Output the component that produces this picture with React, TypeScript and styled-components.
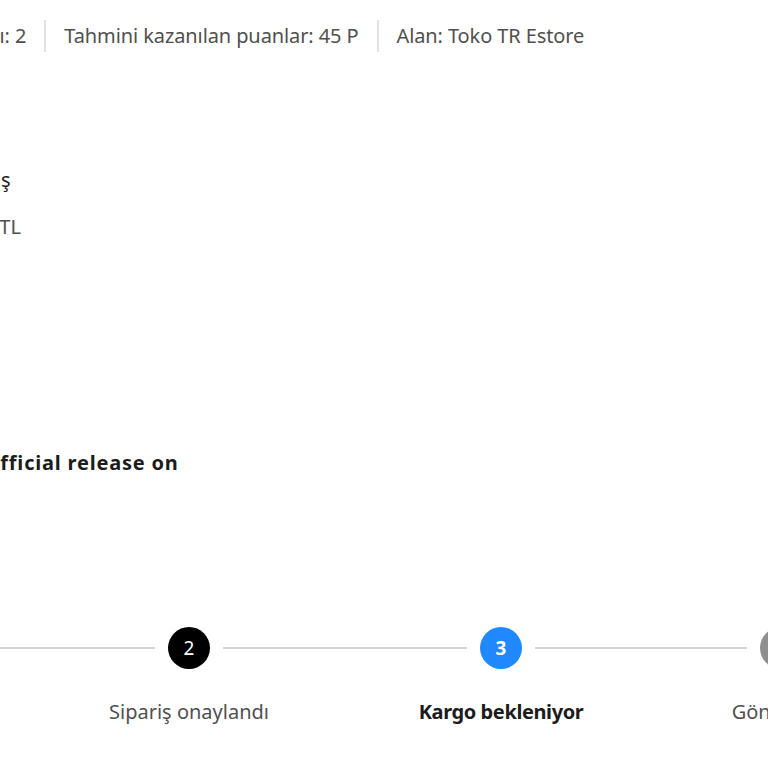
import { Fragment } from 'react'
import styled, { createGlobalStyle } from 'styled-components'

const GlobalStyle = createGlobalStyle`
  html,
  body {
    margin: 0;
    padding: 0;
    overflow: hidden;
    background: #fff;
  }
  body {
    font-family: 'Noto Sans', 'Open Sans', sans-serif;
    color: #1c1c1c;
  }
`

const Page = styled.div`
  display: flex;
  flex-direction: column;
  width: 1000px;
  height: 768px;
  margin-left: -100px;
`

const MetaBar = styled.div`
  display: flex;
  align-items: center;
  height: 34px;
  margin-top: 19px;
  margin-left: 2px;
  font-size: 20px;
  line-height: 28px;
  letter-spacing: -0.1px;
  color: #505050;
  white-space: nowrap;
`

const MetaItem = styled.span``

const Divider = styled.span`
  width: 2px;
  height: 32px;
  margin: 0 18px;
  background: #e2e2e2;
`

const ProductInfo = styled.div`
  display: flex;
  flex-direction: column;
  margin-top: 113px;
  margin-left: -77px;
  font-size: 20px;
  line-height: 28px;
  white-space: nowrap;
`

const DetailGrid = styled.div`
  display: grid;
  grid-template-columns: 120px auto;
  row-gap: 19px;
`

const DetailLabel = styled.span`
  color: #8a8a8a;
`

const DetailValue = styled.span<{ $strong?: boolean }>`
  color: ${(p) => (p.$strong ? '#1c1c1c' : '#505050')};
`

const Notice = styled.div`
  margin-top: 208px;
  font-weight: 700;
  letter-spacing: 0.8px;
  color: #1c1c1c;
`

const Track = styled.div`
  display: flex;
  align-items: flex-start;
  gap: 13px;
  margin-top: 150px;
`

const Segment = styled.div<{ $width: number }>`
  flex-shrink: 0;
  width: ${(p) => p.$width}px;
  height: 2px;
  margin-top: 20px;
  background: #d4d4d4;
`

const Step = styled.div`
  display: flex;
  flex-direction: column;
  align-items: center;
  flex-shrink: 0;
  width: 42px;
`

const Circle = styled.div<{ $tone: 'done' | 'active' | 'todo' }>`
  display: flex;
  align-items: center;
  justify-content: center;
  width: 42px;
  height: 42px;
  border-radius: 50%;
  font-size: 19px;
  font-weight: ${(p) => (p.$tone === 'active' ? 700 : 400)};
  color: #fff;
  background: ${(p) =>
    p.$tone === 'active' ? '#2189ff' : p.$tone === 'done' ? '#000' : '#8f8f8f'};
`

const StepLabel = styled.div<{ $active?: boolean }>`
  margin-top: 29px;
  font-size: 20px;
  line-height: 28px;
  white-space: nowrap;
  font-weight: ${(p) => (p.$active ? 700 : 400)};
  letter-spacing: ${(p) => (p.$active ? '-0.4px' : '0')};
  color: ${(p) => (p.$active ? '#1c1c1c' : '#505050')};
`

const meta = [
  'Ürün sayısı: 2',
  'Tahmini kazanılan puanlar: 45 P',
  'Alan: Toko TR Estore',
]

const details = [
  { label: 'Renk', value: 'Gümüş', strong: true },
  { label: 'Fiyat', value: '1.499 TL', strong: false },
]

const steps = [
  { n: 2, label: 'Sipariş onaylandı', tone: 'done' as const, gap: 244 },
  { n: 3, label: 'Kargo bekleniyor', tone: 'active' as const, gap: 212 },
  { n: 4, label: 'Gönderildi', tone: 'todo' as const, gap: 200 },
]

export default function App() {
  return (
    <>
      <GlobalStyle />
      <Page>
        <MetaBar>
          {meta.map((m, i) => (
            <Fragment key={m}>
              {i > 0 && <Divider />}
              <MetaItem>{m}</MetaItem>
            </Fragment>
          ))}
        </MetaBar>

        <ProductInfo>
          <DetailGrid>
            {details.map((d) => (
              <Fragment key={d.label}>
                <DetailLabel>{d.label}</DetailLabel>
                <DetailValue $strong={d.strong}>{d.value}</DetailValue>
              </Fragment>
            ))}
          </DetailGrid>
          <Notice>Ships after the official release on</Notice>
        </ProductInfo>

        <Track>
          <Segment $width={255} />
          {steps.map((s) => (
            <Fragment key={s.n}>
              <Step>
                <Circle $tone={s.tone}>{s.n}</Circle>
                <StepLabel $active={s.tone === 'active'}>{s.label}</StepLabel>
              </Step>
              <Segment $width={s.gap} />
            </Fragment>
          ))}
        </Track>
      </Page>
    </>
  )
}
